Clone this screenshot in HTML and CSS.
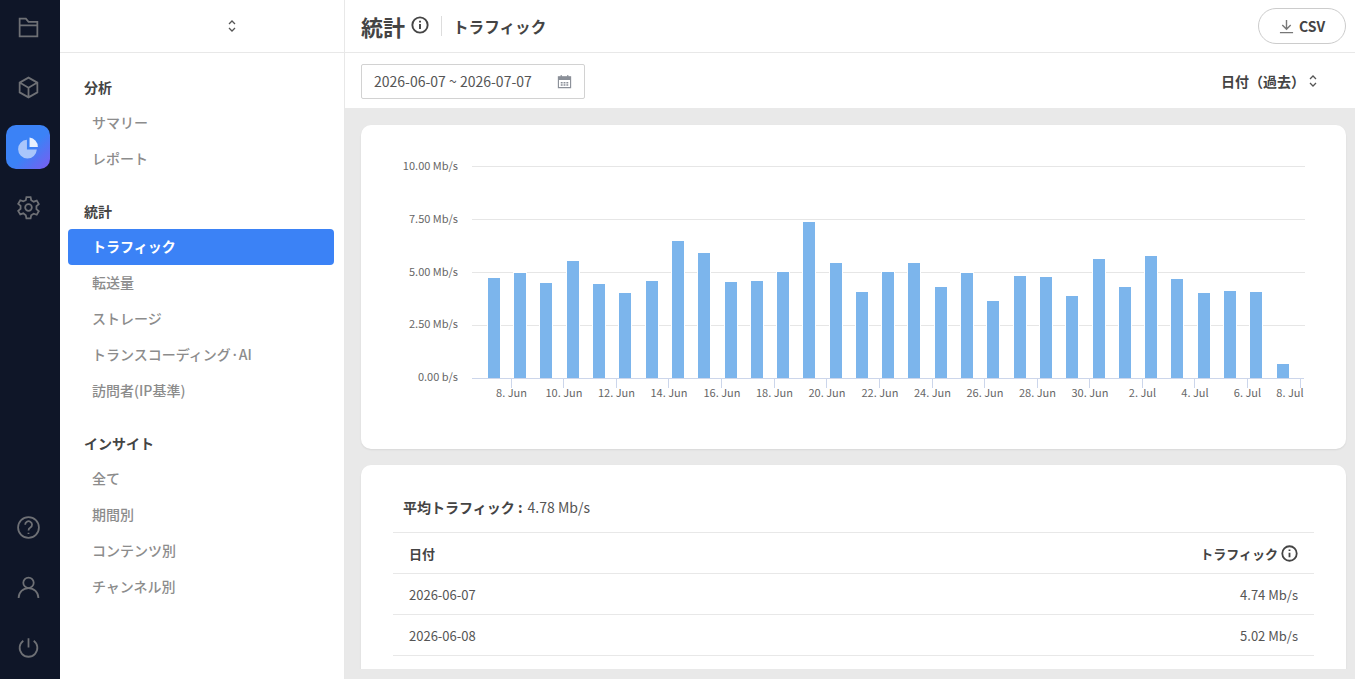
FILE: index.html
```html
<!DOCTYPE html>
<html lang="ja">
<head>
    <meta charset="UTF-8">
    <title>統計 トラフィック</title>
    <link rel="stylesheet" href="styles.css">
</head>
<body>
<div class="rail">
    <div class="rail-group">
        <a class="rail-btn"><svg viewBox="0 0 24 24"><path d="M3.500 20.500v-17h6l2.500 3h8.500v14zM3.500 10h17"/></svg></a>
        <a class="rail-btn"><svg viewBox="0 0 24 24"><path d="M12 2.500l8.500 4.800v9.400L12 21.500l-8.500-4.800V7.300zM3.500 7.300l8.500 4.900 8.500-4.900M12 12.200v9.300"/></svg></a>
        <a class="rail-btn rail-active"><svg viewBox="0 0 24 24"><path class="pie-back" d="M10.500 4.500a9 9 0 1 0 9.500 9.500h-9.500z"/><path class="pie-front" d="M13 2.500a8.800 8.800 0 0 1 8 9h-8z"/></svg></a>
        <a class="rail-btn"><svg viewBox="0 0 24 24"><circle cx="12" cy="12" r="3.200"/><path d="M10 2h4l.6 3 2.400 1.400 2.900-1 2 3.400-2.300 2 0 2.800 2.300 2-2 3.400-2.900-1-2.400 1.400-.6 3h-4l-.6-3L7 17.600l-2.900 1-2-3.400 2.300-2v-2.800l-2.300-2 2-3.400 2.900 1L9.400 5z"/></svg></a>
    </div>
    <div class="rail-group">
        <a class="rail-btn"><svg viewBox="0 0 24 24"><circle cx="12" cy="12" r="10"/><path d="M8.800 9.300a3.300 3.300 0 1 1 5 2.800c-1.200.7-1.800 1.400-1.800 2.700M12 17v1.200"/></svg></a>
        <a class="rail-btn"><svg viewBox="0 0 24 24"><circle cx="12" cy="7.500" r="5"/><path d="M2.500 22a9.500 9.500 0 0 1 19 0"/></svg></a>
        <a class="rail-btn"><svg viewBox="0 0 24 24"><path d="M12 3v9M7 5.500a8.500 8.500 0 1 0 10 0"/></svg></a>
    </div>
</div>

<div class="sidebar">
    <div class="side-top">
        <svg class="updown" viewBox="0 0 10 16"><path d="M2 6l3-3 3 3M2 10l3 3 3-3"/></svg>
    </div>
    <div class="side-nav">
        <div class="nav-group">
            <div class="nav-title">分析</div>
            <a class="nav-item">サマリー</a>
            <a class="nav-item">レポート</a>
        </div>
        <div class="nav-group">
            <div class="nav-title">統計</div>
            <a class="nav-item active">トラフィック</a>
            <a class="nav-item">転送量</a>
            <a class="nav-item">ストレージ</a>
            <a class="nav-item">トランスコーディング·AI</a>
            <a class="nav-item">訪問者(IP基準)</a>
        </div>
        <div class="nav-group">
            <div class="nav-title">インサイト</div>
            <a class="nav-item">全て</a>
            <a class="nav-item">期間別</a>
            <a class="nav-item">コンテンツ別</a>
            <a class="nav-item">チャンネル別</a>
        </div>
    </div>
</div>

<div class="main">
    <div class="topbar">
        <h1>統計</h1>
        <svg class="info" viewBox="0 0 16 16"><circle cx="8" cy="8" r="6.800"/><path d="M8 7.200v4.300M8 4.300v1.400"/></svg>
        <span class="divider"></span>
        <h2>トラフィック</h2>
        <button class="csv-btn">
            <svg viewBox="0 0 16 16"><path d="M8 1v10M3.500 6.500L8 11l4.500-4.500M1 14.500h14"/></svg>
            CSV
        </button>
    </div>
    <div class="filterbar">
        <div class="date-box">
            <span>2026-06-07 ~ 2026-07-07</span>
            <svg viewBox="0 0 16 16"><path class="cal-line" d="M1.500 3h13v11.500h-13zM4.500 1v3M11.500 1v3"/><path class="cal-head" d="M1.500 3h13v3.500h-13zM4 8.500h2v1.500H4zM7 8.500h2v1.500H7zM10 8.500h2v1.500h-2zM4 11h2v1.500H4zM7 11h2v1.500H7zM10 11h2v1.500h-2z"/></svg>
        </div>
        <div class="sort">
            日付（過去）
            <svg class="updown" viewBox="0 0 10 16"><path d="M2 6l3-3 3 3M2 10l3 3 3-3"/></svg>
        </div>
    </div>
    <div class="content">
        <div class="card chart-card">
            <svg class="chart" viewBox="393 150 921 260">
                <g class="grid">
                    <path d="M472 166.500H1305M472 219.500H1305M472 272.500H1305M472 325.500H1305"/>
                </g>
                <g class="bars">
                    <rect x="488" y="278" width="12" height="100"/>
                    <rect x="514" y="273" width="12" height="105"/>
                    <rect x="540" y="283" width="12" height="95"/>
                    <rect x="567" y="261" width="12" height="117"/>
                    <rect x="593" y="284" width="12" height="94"/>
                    <rect x="619" y="293" width="12" height="85"/>
                    <rect x="646" y="281" width="12" height="97"/>
                    <rect x="672" y="241" width="12" height="137"/>
                    <rect x="698" y="253" width="12" height="125"/>
                    <rect x="725" y="282" width="12" height="96"/>
                    <rect x="751" y="281" width="12" height="97"/>
                    <rect x="777" y="272" width="12" height="106"/>
                    <rect x="803" y="222" width="12" height="156"/>
                    <rect x="830" y="263" width="12" height="115"/>
                    <rect x="856" y="292" width="12" height="86"/>
                    <rect x="882" y="272" width="12" height="106"/>
                    <rect x="908" y="263" width="12" height="115"/>
                    <rect x="935" y="287" width="12" height="91"/>
                    <rect x="961" y="273" width="12" height="105"/>
                    <rect x="987" y="301" width="12" height="77"/>
                    <rect x="1014" y="276" width="12" height="102"/>
                    <rect x="1040" y="277" width="12" height="101"/>
                    <rect x="1066" y="296" width="12" height="82"/>
                    <rect x="1093" y="259" width="12" height="119"/>
                    <rect x="1119" y="287" width="12" height="91"/>
                    <rect x="1145" y="256" width="12" height="122"/>
                    <rect x="1171" y="279" width="12" height="99"/>
                    <rect x="1198" y="293" width="12" height="85"/>
                    <rect x="1224" y="291" width="12" height="87"/>
                    <rect x="1250" y="292" width="12" height="86"/>
                    <rect x="1277" y="364" width="12" height="14"/>
                </g>
                <path class="axis" d="M472 378.500H1304M511.500 378v10M563.500 378v10M616.500 378v10M668.500 378v10M721.500 378v10M774.500 378v10M826.500 378v10M879.500 378v10M932.500 378v10M984.500 378v10M1037.500 378v10M1089.500 378v10M1142.500 378v10M1194.500 378v10M1247.500 378v10M1300.500 378v10"/>
                <g class="y-labels">
                    <text x="458" y="170">10.00 Mb/s</text>
                    <text x="458" y="223">7.50 Mb/s</text>
                    <text x="458" y="276">5.00 Mb/s</text>
                    <text x="458" y="328">2.50 Mb/s</text>
                    <text x="458" y="381">0.00 b/s</text>
                </g>
                <g class="x-labels">
                    <text x="511.500" y="397">8. Jun</text>
                    <text x="564" y="397">10. Jun</text>
                    <text x="616.500" y="397">12. Jun</text>
                    <text x="669" y="397">14. Jun</text>
                    <text x="722" y="397">16. Jun</text>
                    <text x="774.500" y="397">18. Jun</text>
                    <text x="827" y="397">20. Jun</text>
                    <text x="880" y="397">22. Jun</text>
                    <text x="932.500" y="397">24. Jun</text>
                    <text x="985" y="397">26. Jun</text>
                    <text x="1037.500" y="397">28. Jun</text>
                    <text x="1090" y="397">30. Jun</text>
                    <text x="1142.500" y="397">2. Jul</text>
                    <text x="1195" y="397">4. Jul</text>
                    <text x="1247.500" y="397">6. Jul</text>
                    <text x="1290" y="397">8. Jul</text>
                </g>
            </svg>
        </div>
        <div class="card table-card">
            <p class="average"><b>平均トラフィック :</b> 4.78 Mb/s</p>
            <table>
                <thead>
                <tr>
                    <td>日付</td>
                    <td class="num">
                        <span class="th-info">トラフィック
                            <svg class="info" viewBox="0 0 16 16"><circle cx="8" cy="8" r="6.800"/><path d="M8 7.200v4.300M8 4.300v1.400"/></svg>
                        </span>
                    </td>
                </tr>
                </thead>
                <tbody>
                <tr><td>2026-06-07</td><td class="num">4.74 Mb/s</td></tr>
                <tr><td>2026-06-08</td><td class="num">5.02 Mb/s</td></tr>
                </tbody>
            </table>
        </div>
    </div>
</div>
</body>
</html>
```

FILE: styles.css
```css
html, body {
    margin: 0;
    padding: 0;
    height: 100%;
}
body {
    display: flex;
    height: 100vh;
    overflow: hidden;
    font-family: "Noto Sans CJK JP", "Noto Sans", sans-serif;
    font-size: 14px;
    color: #4a4a4a;
    background: #fff;
}

/* left icon rail */
.rail {
    width: 60px;
    flex: none;
    background: #0f1628;
    display: flex;
    flex-direction: column;
    justify-content: space-between;
    padding: 5px 0 10px;
    box-sizing: border-box;
}
.rail-btn {
    display: flex;
    align-items: center;
    justify-content: center;
    width: 44px;
    height: 44px;
    margin: 0 0 16px 6px;
    border-radius: 10px;
}
.rail-group .rail-btn:last-child {
    margin-bottom: 0;
}
.rail-btn svg {
    width: 25px;
    height: 25px;
    fill: none;
    stroke: #6e7075;
    stroke-width: 1.700;
}
.rail-active {
    background: linear-gradient(135deg, #3b82f6 55%, #7c5cf0 100%);
}
.rail-active svg {
    stroke: none;
}
.pie-back {
    fill: #a9c6fb;
}
.pie-front {
    fill: #e8f0fe;
}

/* second column */
.sidebar {
    width: 285px;
    flex: none;
    box-sizing: border-box;
    border-right: 1px solid #e8e8e8;
    background: #fff;
}
.side-top {
    height: 52px;
    display: flex;
    align-items: center;
    justify-content: center;
    border-bottom: 1px solid #e8e8e8;
    padding-left: 60px;
}
.updown {
    width: 10px;
    height: 16px;
    fill: none;
    stroke: #555;
    stroke-width: 1.300;
}
.side-nav {
    padding: 18px 10px 0 8px;
}
.nav-group {
    margin-bottom: 18px;
}
.nav-title {
    height: 34px;
    line-height: 32px;
    padding-left: 16px;
    font-weight: 700;
    color: #444;
}
.nav-item {
    display: block;
    height: 36px;
    line-height: 35px;
    padding-left: 24px;
    font-weight: 500;
    color: #8c8c8c;
    border-radius: 4px;
}
.nav-item.active {
    background: #3b82f6;
    color: #fff;
    font-weight: 700;
}

/* main */
.main {
    flex: 1;
    min-width: 0;
    display: flex;
    flex-direction: column;
    background: #e9e9e9;
}
.topbar {
    height: 52px;
    flex: none;
    display: flex;
    align-items: center;
    padding: 0 9px 0 16px;
    background: #fff;
    border-bottom: 1px solid #e8e8e8;
}
h1 {
    margin: 0 6px 0 0;
    font-size: 22px;
    font-weight: 700;
    color: #444;
}
h2 {
    margin: 0;
    font-size: 15.600px;
    font-weight: 700;
    color: #444;
}
.info {
    width: 17px;
    height: 17px;
    fill: none;
    stroke: #444;
    stroke-width: 1.700;
}
.topbar .info {
    width: 18px;
    height: 18px;
    margin-bottom: 3px;
}
.divider {
    width: 1px;
    height: 20px;
    margin: 0 11px 0 12px;
    background: #ddd;
}
.csv-btn {
    margin-left: auto;
    width: 88px;
    height: 36px;
    display: flex;
    align-items: center;
    justify-content: center;
    gap: 5px;
    background: #fff;
    border: 1px solid #ccc;
    border-radius: 18px;
    font-family: inherit;
    font-size: 14px;
    font-weight: 700;
    color: #444;
}
.csv-btn svg {
    width: 15px;
    height: 15px;
    fill: none;
    stroke: #777;
    stroke-width: 1.500;
}
.filterbar {
    height: 55px;
    box-sizing: border-box;
    flex: none;
    display: flex;
    align-items: center;
    justify-content: space-between;
    padding: 1px 37px 0 16px;
    background: #fff;
}
.date-box {
    width: 224px;
    height: 35px;
    box-sizing: border-box;
    display: flex;
    align-items: center;
    justify-content: space-between;
    padding: 0 12px;
    border: 1px solid #d2d2d2;
    border-radius: 2px;
    color: #555;
}
.date-box svg {
    width: 15px;
    height: 15px;
}
.cal-line {
    fill: none;
    stroke: #8a8f98;
    stroke-width: 1.200;
}
.cal-head {
    fill: #8a8f98;
    fill-rule: evenodd;
}
.sort {
    display: flex;
    align-items: center;
    gap: 3px;
    font-weight: 700;
    color: #444;
}
.content {
    flex: 1;
    min-height: 0;
    overflow: hidden;
    margin-bottom: 10px;
    padding: 17px 9px 0 16px;
}
.card {
    background: #fff;
    border-radius: 10px;
    box-shadow: 0 1px 2px rgba(0, 0, 0, .08);
    padding: 0 32px;
}
.chart-card {
    height: 324px;
    box-sizing: border-box;
    padding-top: 25px;
    margin-bottom: 16px;
}
.chart {
    display: block;
    width: 921px;
    height: 260px;
}
.grid path {
    fill: none;
    stroke: #e6e6e6;
}
.bars rect {
    fill: #7cb5ec;
    stroke: #fff;
    stroke-width: 2;
    paint-order: stroke;
}
.axis {
    fill: none;
    stroke: #ccd6eb;
}
.y-labels text,
.x-labels text {
    font-size: 11px;
    fill: #666;
}
.y-labels text {
    text-anchor: end;
}
.x-labels text {
    text-anchor: middle;
}
.table-card {
    padding-top: 30px;
    padding-bottom: 40px;
}
.average {
    margin: 0 0 12px 10px;
    line-height: 25px;
    color: #555;
}
.average b {
    color: #444;
    margin-right: 2px;
}
table {
    width: 100%;
    border-collapse: collapse;
    font-size: 13px;
}
td {
    height: 40px;
    padding: 0 16px;
    border-top: 1px solid #e8e8e8;
    border-bottom: 1px solid #e8e8e8;
    color: #555;
}
thead td {
    font-weight: 700;
    color: #444;
}
.num {
    text-align: right;
}
.th-info {
    display: inline-flex;
    align-items: center;
    gap: 3px;
}
```
